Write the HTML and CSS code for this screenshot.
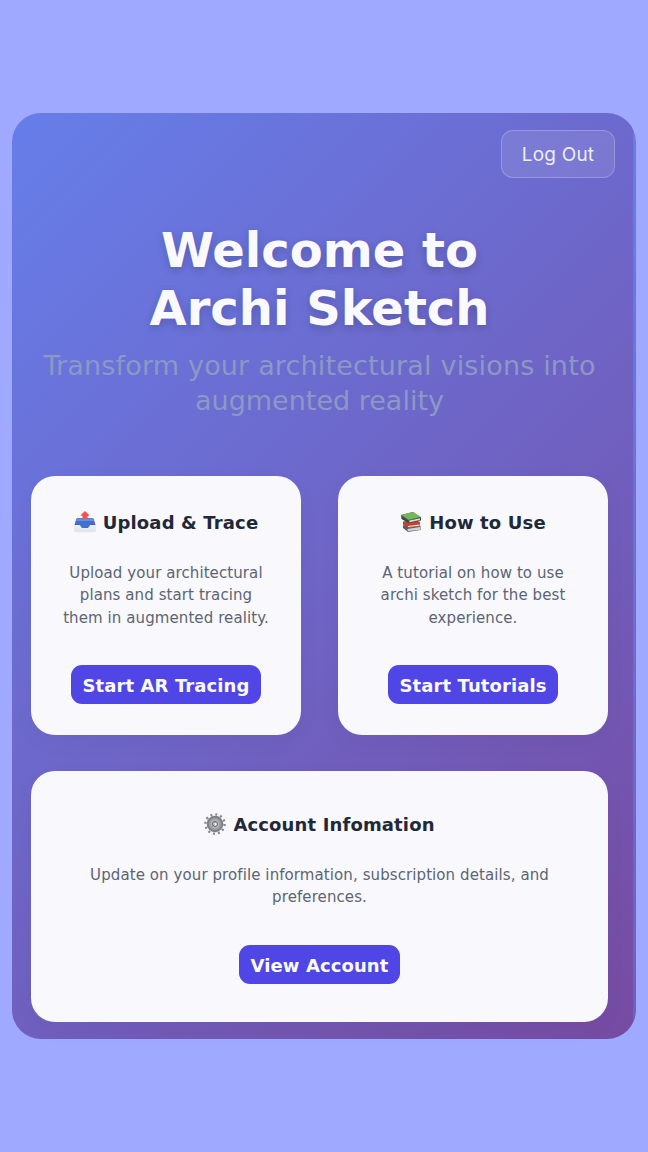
FILE: index.html
```html
<!DOCTYPE html>
<html lang="en">
<head>
<meta charset="utf-8">
<title>Archi Sketch</title>
<link rel="stylesheet" href="styles.css">
</head>
<body>
<main class="panel">
  <nav class="topbar"><button class="logout">Log Out</button></nav>
  <header class="hero">
    <h1 class="title">Welcome to<br>Archi Sketch</h1>
    <p class="subtitle"><span class="subtitle-lead">Transform your architectural visions into</span><br>augmented reality</p>
  </header>
  <section class="cards">
    <article class="card">
      <h2 class="card-title">
        <svg class="icon" viewBox="0 0 22 22" aria-hidden="true">
          <path d="M0 14 2.5 7.5H19.5L22 14V21H0Z" fill="#e9ebf1"/>
          <path d="M.6 14 2.8 7.3H19.2L21.4 14Z" fill="#4c566e"/>
          <path d="M2 8.2H20L20.6 13.5H16.5L14 17H8L5.500 13.500H1.400Z" fill="#4270cf"/>
          <path d="M2.800 7.800H19.200L19.700 10H2.300Z" fill="#6590e4"/>
          <path d="M.5 19H21.500M1 20.700H21" stroke="#d8dbe3" stroke-width=".6"/>
          <path d="M11 0 15.400 4.200 13.500 5.200V7.500H8.500V5.200L6.600 4.200Z" fill="#fb5148"/>
        </svg>
        <span>Upload &amp; Trace</span>
      </h2>
      <p class="card-text">Upload your architectural<br>plans and start tracing<br>them in augmented reality.</p>
      <button class="action">Start AR Tracing</button>
    </article>
    <article class="card">
      <h2 class="card-title">
        <svg class="icon" viewBox="0 0 22 22" aria-hidden="true">
          <path d="M3 14.5 15 13 20.5 16V19L8 21 3 17Z" fill="#56616b"/>
          <path d="M7 17 20 15.3V18.7L8 20.3Z" fill="#d2d3d2"/>
          <path d="M3 14.6 7 17.5 20.5 15.4" fill="none" stroke="#535b63"/>
          <path d="M3 10.5 15 8.5 20 11V15L8 16.7 3 13.5Z" fill="#c83e2c"/>
          <path d="M8 15 19.5 13.5V14.7L8 16.1Z" fill="#ece7df"/>
          <path d="M1 4 13 1 21 6.4V9.5L8.5 12 1.500 8Z" fill="#344850"/>
          <path d="M9 9.6 20 7.200V9L9.500 11.200Z" fill="#d9ddd6"/>
          <path d="M1 4 13 1 21 6 8.7 9Z" fill="#78b65a"/>
          <path d="M1.3 4.4 8.7 9.2 21 6.4" fill="none" stroke="#4a8048" stroke-width=".7"/>
        </svg>
        <span>How to Use</span>
      </h2>
      <p class="card-text">A tutorial on how to use<br>archi sketch for the best<br>experience.</p>
      <button class="action">Start Tutorials</button>
    </article>
    <article class="card card-wide">
      <h2 class="card-title">
        <svg class="icon" viewBox="0 0 22 22" aria-hidden="true">
          <circle cx="11" cy="11" r="9.6" fill="none" stroke="#85898d" stroke-width="2.4" stroke-dasharray="2 3.026"/>
          <circle cx="11" cy="11" r="7.2" fill="#a9acb0" stroke="#7d8185" stroke-width="2.2"/>
          <circle cx="11" cy="11" r="5" fill="#b2b5b9" stroke="#95989c"/>
          <circle cx="11" cy="11" r="2.5" fill="#d5d6da" stroke="#64686c"/>
          <path d="M8.4 13.4 11 11V8.5" fill="none" stroke="#63666a" stroke-width=".8"/>
          <circle cx="11.4" cy="11" r="1" fill="#fff"/>
        </svg>
        <span>Account Infomation</span>
      </h2>
      <p class="card-text">Update on your profile information, subscription details, and<br>preferences.</p>
      <button class="action">View Account</button>
    </article>
  </section>
</main>
</body>
</html>
```
FILE: styles.css
```css
* { box-sizing: border-box; }

body {
  margin: 0;
  height: 1152px;
  padding: 113px 12px 113px 11.5px;
  overflow: hidden;
  background: #9fa9ff;
  font-family: Verdana, "DejaVu Sans", sans-serif;
}

.panel {
  height: 926px;
  padding: 17px 28px 0 19.5px;
  border-radius: 29px;
  background: linear-gradient(135deg, #667eea 0%, #764ba2 100%) 0 0 / 621px 100% repeat-x;
}

.topbar {
  display: flex;
  justify-content: flex-end;
  margin-right: -7px;
}

.logout {
  width: 114px;
  height: 48px;
  padding: 0;
  border: 1.5px solid rgba(255, 255, 255, .22);
  border-radius: 12px;
  background: rgba(255, 255, 255, .1);
  color: #ececfa;
  font: 400 19px Inter, sans-serif;
  letter-spacing: .2px;
}

.hero {
  height: 298px;
  padding-top: 44px;
  text-align: center;
  white-space: nowrap;
}

.title {
  margin: 0;
  color: #f9f9ff;
  font-size: 48px;
  line-height: 57.6px;
  text-shadow: 0 3px 8px rgba(0, 0, 0, .18);
}

.subtitle {
  margin: 11px 0 0;
  color: #8c98c5;
  font-size: 27px;
  line-height: 35px;
}

.subtitle-lead { letter-spacing: .17px; }

.cards {
  display: grid;
  grid-template-columns: 270px 270px;
  grid-template-rows: 259px 251px;
  gap: 36px 37px;
}

.card {
  display: flex;
  flex-direction: column;
  align-items: center;
  padding-top: 34px;
  border-radius: 24px;
  background: #f8f8fd;
  box-shadow: 0 8px 24px rgba(0, 0, 0, .03);
  text-align: center;
  white-space: nowrap;
}

.card-wide {
  grid-column: 1 / -1;
  padding-top: 41px;
}

.card-title {
  display: flex;
  align-items: center;
  gap: 7px;
  height: 24px;
  margin: 0 0 27.5px;
  color: #1f2937;
  font-size: 18px;
  letter-spacing: .14px;
}

.icon { width: 22px; height: 22px; }

.card-text {
  margin: 0 0 35.5px;
  color: #5c6573;
  font-size: 15px;
  line-height: 22.8px;
  letter-spacing: .09px;
}

.action {
  height: 39px;
  padding: 2px 11.5px 0;
  border: 0;
  border-radius: 11px;
  background: #4f46e5;
  color: #fafaff;
  font: 700 18px Verdana, "DejaVu Sans", sans-serif;
  letter-spacing: .1px;
}
```
